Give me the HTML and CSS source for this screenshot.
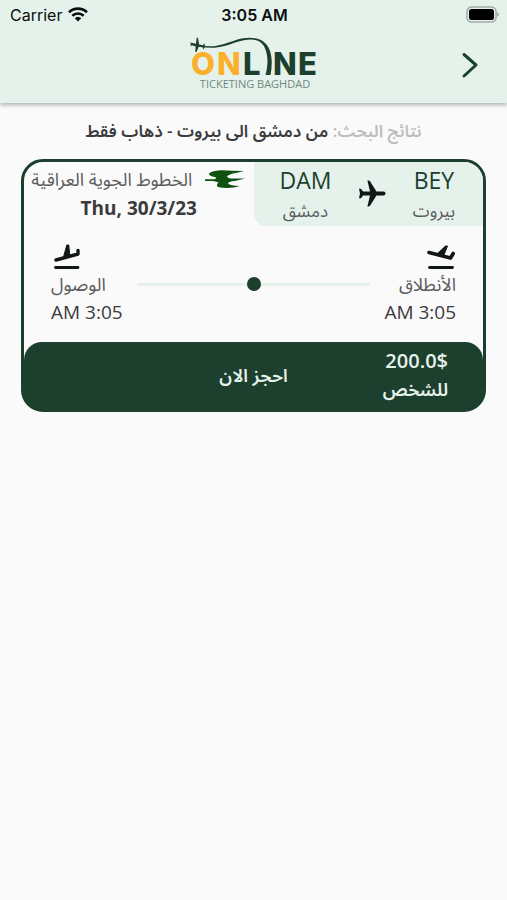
FILE: index.html
```html
<!DOCTYPE html>
<html lang="ar" dir="rtl">
<head>
<meta charset="utf-8">
<meta name="viewport" content="width=device-width, initial-scale=1">
<title>Online Ticketing Baghdad</title>
<link rel="stylesheet" href="styles.css">
</head>
<body>
<header class="header">
  <div class="status" dir="ltr">
    <div class="carrier">
      <span>Carrier</span>
      <svg width="20" height="15" viewBox="0 0 20 15" fill="none" stroke="#0b0f0d" stroke-width="2.6">
        <path d="M1 5.2a13 13 0 0 1 18 0"/>
        <path d="M4.3 8.8a8.2 8.2 0 0 1 11.4 0"/>
        <path d="M10 14.6L6.700 11.2a4.8 4.8 0 0 1 6.600 0z" fill="#0b0f0d" stroke="none"/>
      </svg>
    </div>
    <span class="clock">3:05 AM</span>
    <svg class="battery" width="34" height="17" viewBox="0 0 34 17">
      <rect x="2" y="1" width="29" height="15" rx="4.5" fill="none" stroke="#a3aaa6" stroke-width="1.5"/>
      <rect x="4" y="3" width="25" height="11" rx="2.5" fill="#000"/>
      <path d="M32 6v5q1.800-.8 1.800-2.500t-1.800-2.500z" fill="#a3aaa6"/>
    </svg>
  </div>
  <div class="bar">
    <svg class="logo" width="130" height="56" viewBox="0 0 130 56" direction="ltr" role="img" aria-label="Online Ticketing Baghdad">
      <path d="M12 9.500C27 12 35 8 47 4C60 0 76 0 81 15C83.500 23 83 31 81.500 39H76.500C79 30 79 22 77 15C73 1 60 2.500 48 6C36 10 27 13.500 12 10.800z" fill="#1c402d"/>
      <path d="M1 6.500L7 7.800 7.600 2Q8.400 .900 9 2.300L10.200 8.500 14 9.200 15.300 7 15.800 9.700 17.500 10.500 15.600 11.200 14.700 13.500 13.300 11.200 9.800 10.800 7.500 16H6.300L6.600 10.400 3 9.200 1.500 10.500 1.800 8.200z" fill="#1c402d"/>
      <text class="logo-word" y="39"><tspan class="logo-gold" x="2">O</tspan><tspan class="logo-gold" x="28">N</tspan><tspan x="54">L</tspan><tspan x="84">N</tspan><tspan x="109">E</tspan></text>
      <text class="logo-sub" x="66" y="52" text-anchor="middle">TICKETING BAGHDAD</text>
    </svg>
    <button class="back" type="button" aria-label="رجوع">
      <svg width="18" height="28" viewBox="0 0 18 28" fill="none" stroke="#1c402d" stroke-width="3" stroke-linecap="round" stroke-linejoin="round"><path d="M3 2.500L15 13 3 24"/></svg>
    </button>
  </div>
</header>

<main class="main">
  <h1 class="results"><span class="results-label">نتائج البحث:</span> من دمشق الى بيروت - ذهاب فقط</h1>

  <article class="card">
    <div class="top">
      <div class="route">
        <div class="city"><span class="code">BEY</span><span class="name">بيروت</span></div>
        <svg width="28" height="28" viewBox="0 0 28 28" fill="#111714"><path d="M27.500 13.500c0-1.200-.8-1.900-2-1.900H18.500L12 1.200Q11.500 .500 10.500 .500H9.400L12 11.600H5L3.300 9Q3 8.500 1 8.700L2 13.500 1 18.300Q3 18.500 3.300 18L5 15.400H12L9.400 26.500H10.500Q11.500 26.500 12 25.800L18.500 15.400H25.500c1.200 0 2-.7 2-1.900z"/></svg>
        <div class="city"><span class="code">DAM</span><span class="name">دمشق</span></div>
      </div>
      <div class="airline">
        <div class="airline-name">
          <svg width="42" height="20" viewBox="0 0 42 20" fill="#0f5210"><path d="M5 4.500C9 1 18 .800 28 1.800L40 2 32 4Q25 5 23 7.500Q24 9.500 29 9.500H41L31 12Q24 12.500 24 14.500Q26 16.500 36 17L30 18.500Q21 19.500 14 18Q11.500 16.500 14.500 13.300L9 12H1V10.300H10Q14 9.500 11 8Q5 7 5 4.500z"/></svg>
          <span>الخطوط الجوية العراقية</span>
        </div>
        <span class="date" dir="ltr">Thu, 30/3/23</span>
      </div>
    </div>

    <div class="times">
      <div class="stop">
        <svg width="30" height="28" viewBox="0 0 30 28" fill="#111714" stroke="#111714" stroke-linecap="round" stroke-linejoin="round"><path d="M3.500 25.500H26.500" stroke-width="2.800"/><path d="M3 10.500L24.500 16 27.200 11.500" fill="none" stroke-width="3.600"/><path d="M10.500 12.500L19.500 4H21.500L17.500 14z" stroke-width="1"/></svg>
        <span class="place">الأنطلاق</span>
        <span class="time" dir="ltr">AM 3:05</span>
      </div>
      <div class="track"><span class="dot"></span></div>
      <div class="stop stop-end">
        <svg width="30" height="28" viewBox="0 0 30 28" fill="#111714" stroke="#111714" stroke-linecap="round" stroke-linejoin="round"><path d="M4.500 25.500H27" stroke-width="2.800"/><path d="M5 18L27 12V8.500" fill="none" stroke-width="3.400"/><path d="M12.500 15L15.800 3H17.800L18.800 14z" stroke-width="1"/></svg>
        <span class="place">الوصول</span>
        <span class="time" dir="ltr">AM 3:05</span>
      </div>
    </div>

    <button class="book" type="button">
      <span class="price"><span class="amount" dir="ltr">200.0$</span><span>للشخص</span></span>
      <span>احجز الان</span>
    </button>
  </article>
</main>
</body>
</html>
```
FILE: styles.css
```css
* { box-sizing: border-box; }

body {
  margin: 0;
  min-height: 100vh;
  background: #fafafa;
  color: #3b3b3d;
  font-family: "Open Sans", "Noto Sans", "Noto Sans Arabic", "DejaVu Sans", sans-serif;
}

svg { display: block; }

button {
  border: 0;
  font: inherit;
  cursor: pointer;
}

.header {
  background: #e5f2eb;
  box-shadow: 0 2px 4px rgba(0, 0, 0, 0.3);
}

.status {
  display: grid;
  grid-template-columns: 1fr auto 1fr;
  align-items: center;
  height: 29px;
  padding: 0 8px 0 10px;
  color: #0b0f0d;
  font: 16px/20px Inter, sans-serif;
}

.carrier {
  display: flex;
  align-items: center;
  gap: 6px;
}

.clock { font-weight: 600; }

.battery { justify-self: end; }

.bar {
  display: grid;
  grid-template-columns: 1fr auto 1fr;
  align-items: center;
  height: 74px;
  padding: 0 24px;
}

.logo {
  grid-column: 2;
  grid-row: 1;
  align-self: start;
  margin-top: 7px;
  overflow: visible;
}

.logo-word {
  fill: #1c402d;
  font: 800 31px Inter, sans-serif;
}

.logo-gold { fill: #fbb02d; }

.logo-sub {
  fill: #70877b;
  font: 11px "Open Sans", sans-serif;
}

.back {
  grid-column: 1;
  grid-row: 1;
  justify-self: start;
  padding: 4px;
  background: none;
}

.main { padding: 14px 21px; }

.results {
  margin: 0 0 14px;
  font-size: 17px;
  font-weight: 600;
  line-height: 28px;
  text-align: center;
}

.results-label { color: #bdbdbf; }

.card {
  overflow: hidden;
  border: 3px solid #1c402d;
  border-radius: 22px;
  background: linear-gradient(#fafafa 88%, #1c402d 88%);
}

.top {
  display: flex;
  justify-content: space-between;
}

.route {
  display: flex;
  align-items: center;
  justify-content: space-between;
  width: 50%;
  height: 64px;
  padding: 0 28px 0 26px;
  background: #e5f2eb;
  border-bottom-left-radius: 12px;
}

.city {
  display: flex;
  flex-direction: column;
  align-items: center;
}

.code {
  color: #1c402d;
  font-size: 23px;
  font-weight: 500;
  line-height: 34px;
}

.name {
  color: #5b5b5e;
  font-size: 17px;
  line-height: 28px;
}

.airline {
  display: flex;
  flex: 1;
  flex-direction: column;
  align-items: center;
}

.airline-name {
  display: flex;
  align-items: center;
  gap: 12px;
  color: #5b5b5e;
  font-size: 18px;
  line-height: 34px;
  white-space: nowrap;
}

.date {
  font-size: 19px;
  font-weight: 700;
  line-height: 24px;
}

.times {
  display: flex;
  align-items: center;
  gap: 14px;
  padding: 16px 27px;
}

.stop {
  display: flex;
  flex-direction: column;
  align-items: flex-start;
}

.stop-end { align-items: flex-end; }

.place {
  color: #5b5b5e;
  font-size: 18px;
  line-height: 28px;
}

.time {
  font-size: 19px;
  font-weight: 500;
  line-height: 28px;
}

.track {
  display: flex;
  flex: 1;
  align-items: center;
  justify-content: center;
  height: 3px;
  background: #e5f2eb;
}

.dot {
  width: 14px;
  height: 14px;
  border-radius: 50%;
  background: #1c402d;
}

.book {
  display: grid;
  grid-template-columns: 1fr auto 1fr;
  align-items: center;
  width: 100%;
  padding: 5px 35px 6px;
  border-radius: 18px 18px 0 0;
  background: #1c402d;
  color: #e5f2eb;
  font-size: 18px;
  font-weight: 600;
  line-height: 28px;
}

.price {
  display: flex;
  flex-direction: column;
  align-items: flex-start;
}

.amount { font-size: 20px; }
```
